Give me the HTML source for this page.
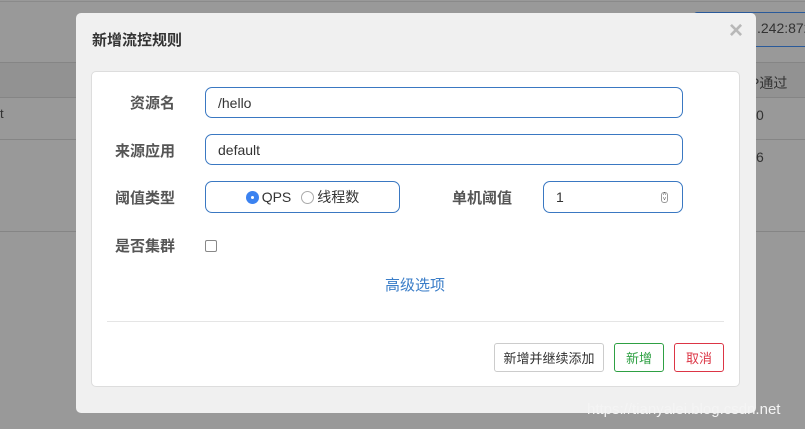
<!DOCTYPE html>
<html><head><meta charset="utf-8"><style>
*{box-sizing:border-box;margin:0;padding:0}
body{width:805px;height:429px;background:#999;position:relative;overflow:hidden;font-family:"Liberation Sans","Noto Sans CJK SC",sans-serif;color:#333}
.abs{position:absolute}
.hl{position:absolute;left:0;width:805px;height:1px;background:#858585}
.lab{position:absolute;font-size:15px;font-weight:bold;color:#555;text-align:right;width:80px;left:95px}
.inp{position:absolute;border:1px solid #3a78c2;border-radius:7px;background:#fff;font-size:14px;color:#333;padding-left:12px;display:flex;align-items:center}
.btn{position:absolute;top:343px;height:29px;border:1px solid #ccc;border-radius:3px;background:#fff;font-size:13px;display:flex;align-items:center;justify-content:center}
</style></head><body>
<div class="hl" style="top:1px;background:#8a8a8a"></div>
<div class="abs" style="left:0;top:62px;width:805px;height:35px;background:#929292"></div>
<div class="hl" style="top:62px"></div>
<div class="hl" style="top:97px"></div>
<div class="hl" style="top:139px"></div>
<div class="hl" style="top:231px"></div>
<div class="abs" style="left:0;top:106px;font-size:13px;color:#333">t</div>
<div class="abs" style="left:694px;top:12px;width:111px;height:35px;border:1px solid #2a5a9a;border-right:none;border-radius:3px 0 0 3px"></div>
<div class="abs" style="left:757px;top:20px;font-size:14px;color:#333">.242:872</div>
<div class="abs" style="left:750px;top:73px;font-size:14px;color:#333">P通过</div>
<div class="abs" style="left:756px;top:107px;font-size:14px;color:#333">0</div>
<div class="abs" style="left:756px;top:149px;font-size:14px;color:#333">6</div>

<div class="abs" style="left:76px;top:13px;width:680px;height:400px;background:#f0f0f0;border-radius:5px"></div>
<div class="abs" style="left:92px;top:29px;font-size:15px;font-weight:bold;color:#333">新增流控规则</div>
<div class="abs" style="left:729px;top:17px;font-size:24px;color:#b8b8b8;font-weight:bold">×</div>
<div class="abs" style="left:91px;top:71px;width:649px;height:316px;background:#fff;border:1px solid #ddd;border-radius:5px"></div>

<div class="lab" style="top:92px">资源名</div>
<div class="inp" style="left:205px;top:87px;width:478px;height:31px">/hello</div>
<div class="lab" style="top:140px">来源应用</div>
<div class="inp" style="left:205px;top:134px;width:478px;height:31px">default</div>
<div class="lab" style="top:187px">阈值类型</div>
<div class="inp" style="left:205px;top:181px;width:195px;height:32px;justify-content:center;padding-left:0">
<span style="display:inline-block;width:13px;height:13px;border-radius:50%;background:#3b82f0;position:relative;margin-right:3px"><span style="position:absolute;left:5px;top:5px;width:3px;height:3px;border-radius:50%;background:#fff"></span></span>QPS
<span style="display:inline-block;width:13px;height:13px;border-radius:50%;border:1px solid #aaa;margin:0 3px 0 10px"></span>线程数</div>
<div class="abs" style="left:452px;top:187px;font-size:15px;font-weight:bold;color:#555">单机阈值</div>
<div class="inp" style="left:543px;top:181px;width:140px;height:32px">1
<span style="position:absolute;right:14px;top:10px;width:7px;height:11px;border:1px solid #999;border-radius:3px;font-size:6px;line-height:5px;text-align:center;color:#555">˄<br>˅</span></div>
<div class="lab" style="top:235px">是否集群</div>
<div class="abs" style="left:205px;top:240px;width:12px;height:12px;border:1px solid #888;border-radius:2px;background:#fff"></div>
<div class="abs" style="left:385px;top:274px;font-size:15px;color:#3a7dc8">高级选项</div>
<div class="abs" style="left:107px;top:321px;width:617px;height:1px;background:#e5e5e5"></div>

<div class="btn" style="left:494px;width:110px;color:#333">新增并继续添加</div>
<div class="btn" style="left:614px;width:50px;border-color:#2ea043;color:#2ea043">新增</div>
<div class="btn" style="left:674px;width:50px;border-color:#dc3545;color:#dc3545">取消</div>

<div class="abs" style="left:587px;top:401px;font-size:15px;color:#f4f4f4">https://tianyalei.blog.csdn.net</div>
</body></html>
